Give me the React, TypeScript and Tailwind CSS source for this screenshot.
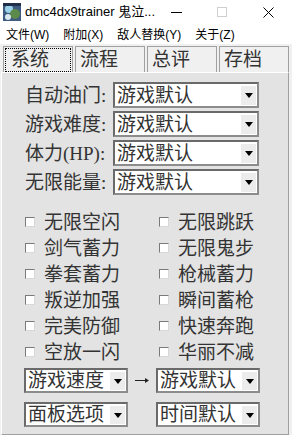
import React from "react";

const cjk = { fontFamily: '"Liberation Serif", "Noto Sans CJK SC", serif' };
const ui = { fontFamily: '"Liberation Sans", "Noto Sans CJK SC", sans-serif' };

function Combo({ text, w, h = 26 }: { text: string; w: string; h?: number }) {
  return (
    <div
      className={`${w} flex bg-white border-2 border-t-[#6a6a6a] border-l-[#6a6a6a] border-b-[#8c8c8c] border-r-[#8c8c8c]`}
      style={{ height: h }}
    >
      <div className="flex-1 flex items-center pl-[2px] text-[19px] leading-none text-[#333]" style={cjk}>
        {text}
      </div>
      <div className="w-[16px] my-[1px] mr-[1px] flex items-center justify-center bg-[#ececec] border-l border-t border-white">
        <svg width="8" height="5" viewBox="0 0 8 5">
          <path d="M0 0h8L4 5z" fill="#000" />
        </svg>
      </div>
    </div>
  );
}

function Check({ label }: { label: string }) {
  return (
    <div className="h-[26px] flex items-center">
      <div className="w-[10px] h-[10px] bg-white border border-t-[#7a7a7a] border-l-[#7a7a7a] border-b-[#d8d8d8] border-r-[#d8d8d8]" />
      <span className="ml-[9px] text-[19px] leading-none text-[#333]" style={cjk}>
        {label}
      </span>
    </div>
  );
}

const rows = ["自动油门:", "游戏难度:", "体力(HP):", "无限能量:"];
const checks = [
  ["无限空闪", "无限跳跃"],
  ["剑气蓄力", "无限鬼步"],
  ["拳套蓄力", "枪械蓄力"],
  ["叛逆加强", "瞬间蓄枪"],
  ["完美防御", "快速奔跑"],
  ["空放一闪", "华丽不减"],
];
const tabs = ["系统", "流程", "总评", "存档"];

export default function App() {
  return (
    <div className="w-[292px] h-[435px] overflow-hidden bg-[#f0f0f0] flex flex-col">
      {/* title bar */}
      <div className="h-[24px] bg-white flex items-center shrink-0" style={ui}>
        <svg className="ml-[3px]" width="18" height="18" viewBox="0 0 18 18">
          <rect width="18" height="18" fill="#3d5a80" />
          <circle cx="6" cy="6" r="4" fill="#9ad0e8" />
          <circle cx="12" cy="11" r="5" fill="#5c8a4a" />
          <circle cx="5" cy="14" r="3" fill="#d9e8f0" />
          <rect x="0" y="0" width="18" height="3" fill="#1f2f4a" />
        </svg>
        <span className="ml-[4px] text-[13px] text-black">dmc4dx9trainer 鬼泣...</span>
        <div className="ml-auto flex items-center">
          <div className="w-[11px] h-px bg-black mr-[35px]" />
          <div className="w-[10px] h-[10px] border border-[#cfcfcf] mr-[36px]" />
          <svg className="mr-[18px]" width="11" height="11" viewBox="0 0 11 11">
            <path d="M0.5 0.5l10 10M10.5 0.5l-10 10" stroke="#000" strokeWidth="1" />
          </svg>
        </div>
      </div>
      {/* menu bar */}
      <div className="h-[20px] pt-[2px] bg-white flex items-center text-[12px] text-black shrink-0" style={ui}>
        <span className="ml-[6px]">文件(W)</span>
        <span className="ml-[14px]">附加(X)</span>
        <span className="ml-[14px]">敌人替换(Y)</span>
        <span className="ml-[14px]">关于(Z)</span>
      </div>
      {/* tabs */}
      <div className="h-[28px] pt-[2px] flex pl-[3px] shrink-0">
        {tabs.map((t, i) => (
          <div
            key={t}
            className={`w-[70px] mr-[2px] bg-[#f0f0f0] border border-[#a0a0a0] border-b-0 flex items-center text-[19px] leading-none text-[#333] ${i === 0 ? "" : "pl-[4px]"}`}
            style={cjk}
          >
            {i === 0 ? (
              <div className="m-[1px] h-[24px] w-full border border-dotted border-black flex items-center pl-[5px]">{t}</div>
            ) : (
              t
            )}
          </div>
        ))}
      </div>
      {/* panel */}
      <div className="flex-1 mx-[1px] mr-[3px] bg-[#e3e3e3] border border-[#a0a0a0] border-t-white border-l-white">
        <div className="pt-[9px] pl-[23px] flex flex-col gap-[3px]">
          {rows.map((r) => (
            <div key={r} className="flex items-center">
              <span className="w-[88px] text-[19px] leading-none text-[#333]" style={cjk}>
                {r}
              </span>
              <Combo text="游戏默认" w="w-[146px]" />
            </div>
          ))}
        </div>
        <div className="mt-[14px] pl-[23px] grid grid-cols-[134px_134px]">
          {checks.map(([a, b]) => (
            <React.Fragment key={a}>
              <Check label={a} />
              <Check label={b} />
            </React.Fragment>
          ))}
        </div>
        <div className="mt-[3px] pl-[22px] flex items-center">
          <Combo text="游戏速度" w="w-[104px]" h={25} />
          <div className="w-[28px] flex justify-center">
            <svg width="16" height="7" viewBox="0 0 16 7">
              <path d="M1 3.5h12" stroke="#222" strokeWidth="1" />
              <path d="M11 1l4 2.5-4 2.5z" fill="#222" />
            </svg>
          </div>
          <Combo text="游戏默认" w="w-[104px]" h={25} />
        </div>
        <div className="mt-[9px] pl-[22px] flex items-center">
          <Combo text="面板选项" w="w-[104px]" h={25} />
          <span className="w-[28px]" />
          <Combo text="时间默认" w="w-[104px]" h={25} />
        </div>
      </div>
    </div>
  );
}
